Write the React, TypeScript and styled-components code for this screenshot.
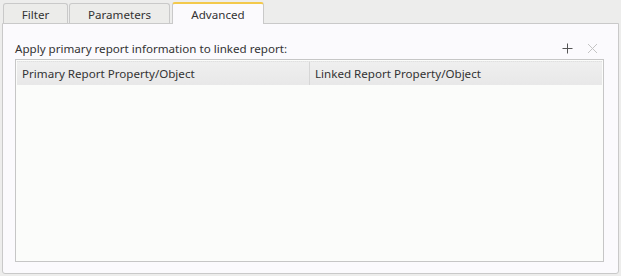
import React from "react";
import styled, { createGlobalStyle } from "styled-components";

const GlobalStyle = createGlobalStyle`
  html, body {
    margin: 0;
    padding: 0;
    background: #ededec;
  }
  body {
    font-family: "Noto Sans", "Open Sans", Arial, sans-serif;
    font-size: 11.6px;
    color: #333;
  }
`;

const tabs = [
  { label: "Filter", width: 65 },
  { label: "Parameters", width: 101 },
  { label: "Advanced", width: 92 },
];

const App: React.FC = () => {
  const active = 2;
  return (
    <>
      <GlobalStyle />
      <Page>
        <TabBar>
          {tabs.map((t, i) => (
            <Tab key={t.label} $active={i === active} $width={t.width}>
              {t.label}
            </Tab>
          ))}
        </TabBar>
        <Panel>
          <LabelRow>
            <Label>Apply primary report information to linked report:</Label>
            <Tools>
              <ToolButton title="Add">
                <svg width="11" height="11" viewBox="0 0 11 11">
                  <path d="M5.5 0.5v10M0.5 5.5h10" stroke="#555" strokeWidth="1" />
                </svg>
              </ToolButton>
              <ToolButton title="Remove" $disabled>
                <svg width="11" height="11" viewBox="0 0 11 11">
                  <path d="M1 1l9 9M10 1l-9 9" stroke="#c4c4c4" strokeWidth="1" />
                </svg>
              </ToolButton>
            </Tools>
          </LabelRow>
          <Grid>
            <HeaderRow>
              <HeaderCell>Primary Report Property/Object</HeaderCell>
              <HeaderCell $last>Linked Report Property/Object</HeaderCell>
            </HeaderRow>
          </Grid>
        </Panel>
      </Page>
    </>
  );
};

export default App;

const Page = styled.div`
  width: 621px;
  height: 276px;
  padding: 2px 2px 2px 2px;
  box-sizing: border-box;
  display: flex;
  flex-direction: column;
`;

const TabBar = styled.div`
  display: flex;
  align-items: flex-end;
  gap: 1px;
  padding-left: 1px;
  height: 21px;
  position: relative;
  z-index: 1;
`;

const Tab = styled.div<{ $active?: boolean; $width: number }>`
  width: ${(p) => p.$width}px;
  box-sizing: border-box;
  height: ${(p) => (p.$active ? 22 : 20)}px;
  margin-bottom: ${(p) => (p.$active ? -1 : 0)}px;
  margin-left: ${(p) => (p.$active ? 1 : 0)}px;
  display: flex;
  justify-content: center;
  align-items: center;
  padding-top: 1px;
  font-size: 11.6px;
  color: #333;
  border: 1px solid #c9c9c9;
  border-bottom: none;
  border-top: ${(p) => (p.$active ? "2px solid #f3c94b" : "1px solid #c9c9c9")};
  border-radius: 3px 3px 0 0;
  background: ${(p) => (p.$active ? "#fbfafd" : "#ececea")};
`;

const Panel = styled.div`
  flex: 1;
  background: #fbfafd;
  border: 1px solid #c9c9c9;
  border-radius: 0 0 3px 3px;
  padding: 14px 14px 11px 12px;
  display: flex;
  flex-direction: column;
`;

const LabelRow = styled.div`
  display: flex;
  justify-content: space-between;
  align-items: center;
  height: 20px;
  margin-bottom: 1px;
`;

const Label = styled.div`
  font-size: 11.6px;
  color: #333;
`;

const Tools = styled.div`
  display: flex;
  gap: 14px;
  padding-right: 6px;
`;

const ToolButton = styled.div<{ $disabled?: boolean }>`
  width: 11px;
  height: 11px;
  display: flex;
  cursor: ${(p) => (p.$disabled ? "default" : "pointer")};
`;

const Grid = styled.div`
  flex: 1;
  border: 1px solid #c6c6c6;
  background: #fbfcfa;
  padding: 1px 1px 0 1px;
`;

const HeaderRow = styled.div`
  display: flex;
  height: 23px;
  background: linear-gradient(#efefef, #e8e8e8);
  border-top: 1px dotted #e0e0e0;
`;

const HeaderCell = styled.div<{ $last?: boolean }>`
  box-sizing: border-box;
  flex: ${(p) => (p.$last ? "1 1 auto" : "0 0 293px")};
  display: flex;
  align-items: center;
  padding-left: 5px;
  font-size: 11.6px;
  color: #333;
  border-right: ${(p) => (p.$last ? "none" : "1px solid #d6d6d6")};
`;
